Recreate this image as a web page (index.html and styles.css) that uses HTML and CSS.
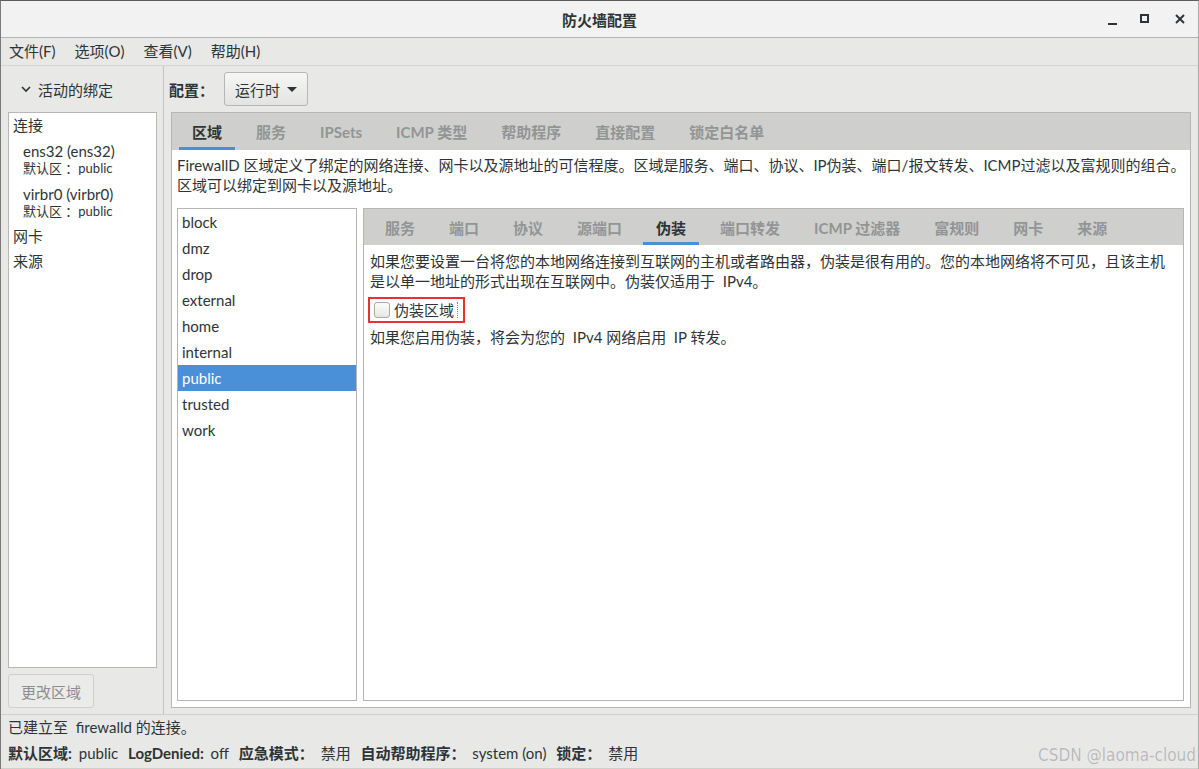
FILE: index.html
```html
<!DOCTYPE html>
<html lang="zh-CN">
<head>
    <meta charset="UTF-8">
    <title>防火墙配置</title>
    <link rel="stylesheet" href="styles.css">
</head>
<body>
<div class="window">
    <header class="titlebar">
        <span class="title">防火墙配置</span>
        <div class="wm-buttons">
            <svg class="wm-btn" width="16" height="16" viewBox="0 0 16 16"><rect x="6" y="12" width="9" height="2" fill="#2e3436"/></svg>
            <svg class="wm-btn" width="16" height="16" viewBox="0 0 16 16"><rect x="4" y="4" width="7" height="7" fill="none" stroke="#2e3436" stroke-width="2"/></svg>
            <svg class="wm-btn" width="16" height="16" viewBox="0 0 16 16"><path d="M4 4 L12 12 M12 4 L4 12" stroke="#2e3436" stroke-width="2"/></svg>
        </div>
    </header>

    <nav class="menubar">
        <span class="menu-item">文件(F)</span>
        <span class="menu-item">选项(O)</span>
        <span class="menu-item">查看(V)</span>
        <span class="menu-item">帮助(H)</span>
    </nav>

    <div class="main">
        <aside class="sidebar">
            <div class="bindings-head">
                <svg width="12" height="12" viewBox="0 0 12 12"><path d="M2 4 L6 8 L10 4" fill="none" stroke="#2e3436" stroke-width="1.6"/></svg>
                <span>活动的绑定</span>
            </div>
            <div class="bindings-list">
                <div class="group">连接</div>
                <div class="conn">
                    <div class="conn-name">ens32 (ens32)</div>
                    <div class="conn-zone">默认区 ：public</div>
                </div>
                <div class="conn">
                    <div class="conn-name">virbr0 (virbr0)</div>
                    <div class="conn-zone">默认区 ：public</div>
                </div>
                <div class="group">网卡</div>
                <div class="group">来源</div>
            </div>
            <button class="btn" disabled>更改区域</button>
        </aside>

        <section class="content">
            <div class="config-row">
                <span class="config-label">配置：</span>
                <button class="dropdown">运行时<span class="caret"></span></button>
            </div>

            <div class="notebook outer">
                <div class="tabs">
                    <span class="tab active">区域</span>
                    <span class="tab">服务</span>
                    <span class="tab">IPSets</span>
                    <span class="tab">ICMP 类型</span>
                    <span class="tab">帮助程序</span>
                    <span class="tab">直接配置</span>
                    <span class="tab">锁定白名单</span>
                </div>
                <div class="page">
                    <p class="desc">FirewallD 区域定义了绑定的网络连接、网卡以及源地址的可信程度。区域是服务、端口、协议、IP伪装、端口/报文转发、ICMP过滤以及富规则的组合。<br>区域可以绑定到网卡以及源地址。</p>

                    <div class="zone-split">
                        <ul class="zone-list">
                            <li>block</li>
                            <li>dmz</li>
                            <li>drop</li>
                            <li>external</li>
                            <li>home</li>
                            <li>internal</li>
                            <li class="selected">public</li>
                            <li>trusted</li>
                            <li>work</li>
                        </ul>

                        <div class="notebook inner">
                            <div class="tabs">
                                <span class="tab">服务</span>
                                <span class="tab">端口</span>
                                <span class="tab">协议</span>
                                <span class="tab">源端口</span>
                                <span class="tab active">伪装</span>
                                <span class="tab">端口转发</span>
                                <span class="tab">ICMP 过滤器</span>
                                <span class="tab">富规则</span>
                                <span class="tab">网卡</span>
                                <span class="tab">来源</span>
                            </div>
                            <div class="page">
                                <p class="desc">如果您要设置一台将您的本地网络连接到互联网的主机或者路由器，伪装是很有用的。您的本地网络将不可见，且该主机<br>是以单一地址的形式出现在互联网中。伪装仅适用于 &nbsp;IPv4。</p>
                                <label class="masq-check">
                                    <span class="checkbox"></span>
                                    <span class="check-label">伪装区域</span>
                                </label>
                                <p class="desc note">如果您启用伪装，将会为您的 &nbsp;IPv4 网络启用 &nbsp;IP 转发。</p>
                            </div>
                        </div>
                    </div>
                </div>
            </div>
        </section>
    </div>

    <footer class="statusbar">
        <div class="status-msg">已建立至 &nbsp;firewalld 的连接。</div>
        <div class="status-line">
            <b>默认区域:</b> <span class="val">public</span>
            <b>LogDenied:</b> <span class="val">off</span>
            <b>应急模式：</b> <span class="val">禁用</span>
            <b>自动帮助程序：</b> <span class="val">system (on)</span>
            <b>锁定：</b> <span class="val">禁用</span>
        </div>
        <span class="watermark">CSDN @laoma-cloud</span>
    </footer>
</div>
</body>
</html>
```

FILE: styles.css
```css
body {
    margin: 0;
    font-family: Lato, "Noto Sans CJK SC", sans-serif;
    font-size: 15px;
    color: #2e3436;
    background: #e8e8e7;
    overflow: hidden;
}
.window {
    width: 1199px;
    height: 769px;
    box-sizing: border-box;
    border-top: 1px solid #5c5c5c;
    border-left: 1px solid #7a7a7a;
    border-right: 1px solid #a8a8a8;
    background: #e8e8e7;
    display: flex;
    flex-direction: column;
    position: relative;
}

/* title bar */
.titlebar {
    height: 36px;
    flex: none;
    background: #f2f2f2;
    border-bottom: 1px solid #b4b4b2;
    display: flex;
    align-items: center;
    justify-content: center;
    position: relative;
}
.title {
    font-weight: bold;
    font-size: 15px;
}
.wm-buttons {
    position: absolute;
    right: 10px;
    top: 10px;
    display: flex;
    gap: 19px;
}
.wm-btn {
    display: block;
}

/* menu bar */
.menubar {
    height: 27px;
    flex: none;
    border-bottom: 1px solid #d4d4d2;
    display: flex;
    align-items: center;
}
.menu-item {
    padding: 0 11px 0 8px;
    line-height: 27px;
}

.main {
    flex: 1;
    display: flex;
    min-height: 0;
}

/* left side: active bindings */
.sidebar {
    width: 163px;
    flex: none;
    box-sizing: border-box;
    padding: 0 6px 6px 7px;
    border-right: 1px solid #c4c4c1;
    display: flex;
    flex-direction: column;
}
.bindings-head {
    height: 46px;
    display: flex;
    align-items: center;
    padding-left: 12px;
    gap: 6px;
}
.bindings-head svg {
    display: block;
}
.bindings-list {
    flex: 1;
    background: #fff;
    border: 1px solid #b6b6b3;
}
.group {
    height: 25px;
    line-height: 25px;
    padding-left: 4px;
}
.conn {
    padding: 4px 0 5px 14px;
}
.conn-name {
    line-height: 18px;
}
.conn-zone {
    font-size: 13px;
    line-height: 16px;
}
.btn {
    margin-top: 6px;
    align-self: flex-start;
    height: 34px;
    padding: 0 12px;
    font: inherit;
    color: #8b8e8f;
    background: #ebebea;
    border: 1px solid #cfcfcc;
    border-radius: 3px;
}

/* right side */
.content {
    flex: 1;
    display: flex;
    flex-direction: column;
    padding: 6px 7px 6px 7px;
    min-width: 0;
}
.config-row {
    display: flex;
    align-items: center;
    margin-bottom: 6px;
}
.config-label {
    font-weight: bold;
    margin-right: 10px;
    margin-left: -2px;
}
.dropdown {
    height: 34px;
    padding: 0 10px;
    font: inherit;
    color: #2e3436;
    background: linear-gradient(#f6f6f5, #e3e3e1);
    border: 1px solid #b6b6b3;
    border-radius: 3px;
    display: flex;
    align-items: center;
}
.caret {
    margin-left: 7px;
    width: 0;
    height: 0;
    border-left: 5px solid transparent;
    border-right: 5px solid transparent;
    border-top: 5px solid #2e3436;
}

/* notebooks */
.notebook {
    border: 1px solid #b6b6b3;
    background: #fff;
    display: flex;
    flex-direction: column;
}
.notebook.outer {
    flex: 1;
    min-height: 0;
}
.tabs {
    background: #cfcfcd;
    display: flex;
    gap: 8px;
    flex: none;
}
.outer > .tabs {
    height: 37px;
    padding-left: 7px;
}
.inner > .tabs {
    height: 36px;
    padding-left: 8px;
}
.tab {
    padding: 0 13px;
    font-weight: bold;
    color: #929595;
    display: flex;
    align-items: center;
    border-bottom: 3px solid transparent;
    box-sizing: border-box;
    padding-top: 3px;
}
.tab.active {
    color: #2e3436;
    border-bottom-color: #4a90d9;
}
.outer > .page {
    flex: 1;
    display: flex;
    flex-direction: column;
    padding: 5px 6px 6px 5px;
    min-height: 0;
}
.desc {
    margin: 0;
    line-height: 20px;
    white-space: nowrap;
}
.outer > .page > .desc {
    margin-bottom: 13px;
}
.zone-split {
    flex: 1;
    display: flex;
    gap: 6px;
    min-height: 0;
}
.zone-list {
    width: 178px;
    flex: none;
    margin: 0;
    padding: 0;
    list-style: none;
    border: 1px solid #b6b6b3;
}
.zone-list li {
    height: 26px;
    line-height: 26px;
    padding-left: 4px;
}
.zone-list li.selected {
    background: #4a90d9;
    color: #fff;
}
.notebook.inner {
    flex: 1;
}
.inner > .page {
    padding: 6px 6px;
}

/* masquerade checkbox, outlined in red */
.masq-check {
    display: inline-flex;
    align-items: center;
    height: 22px;
    margin: 6px 0 4px -2px;
    padding: 0 5px 0 4px;
    border: 2px solid #e8322f;
}
.checkbox {
    width: 14px;
    height: 14px;
    border: 1px solid #a9a9a6;
    border-radius: 3px;
    background: linear-gradient(#fdfdfd, #e6e6e4);
    margin-right: 4px;
}
.check-label {
    line-height: 16px;
    padding-right: 3px;
    border-right: 1px dotted #8c8c8c;
}
.note {
    margin-top: 0;
}

/* status bar */
.statusbar {
    height: 53px;
    flex: none;
    border-top: 1px solid #cfcfcc;
    border-bottom: 1px solid #cfcfcc;
    padding-left: 7px;
    position: relative;
}
.status-msg {
    line-height: 24px;
}
.status-line {
    line-height: 28px;
}
.status-line b {
    font-weight: bold;
}
.status-line .val {
    margin-left: 3px;
    margin-right: 6px;
}
.watermark {
    position: absolute;
    right: 2px;
    bottom: 3px;
    font-family: "DejaVu Sans Condensed", "DejaVu Sans", sans-serif;
    font-stretch: condensed;
    font-size: 17px;
    color: #b9b9b9;
    text-shadow: 0 0 1px #fff;
}
```
